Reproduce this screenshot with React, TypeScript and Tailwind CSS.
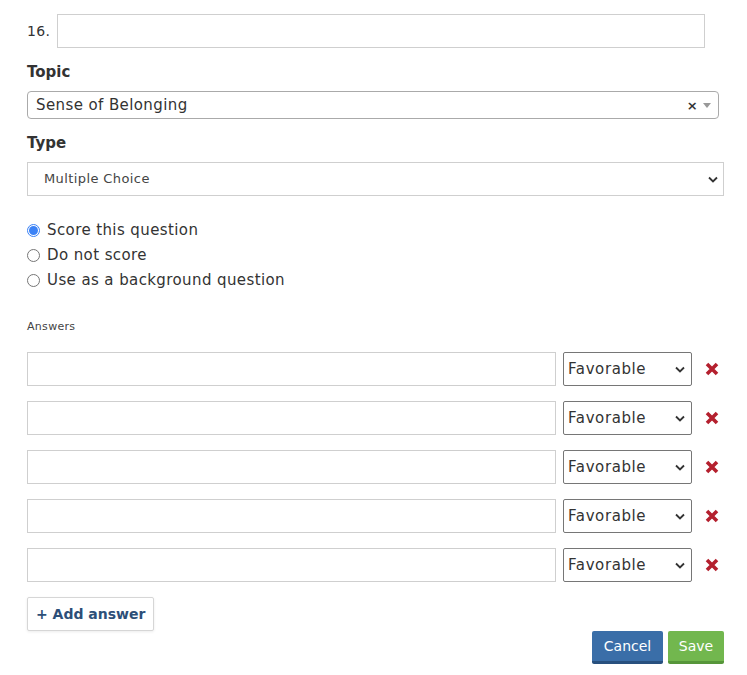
import React from "react";

const Chevron = () => (
  <svg width="10" height="7" viewBox="0 0 10 7" className="shrink-0">
    <path d="M1 1.5 L5 5.5 L9 1.5" fill="none" stroke="#333" strokeWidth="1.8" />
  </svg>
);

const RedX = () => (
  <svg width="14" height="14" viewBox="0 0 14 14">
    <path d="M2 2 L12 12 M12 2 L2 12" stroke="#b4202e" strokeWidth="3.6" strokeLinecap="butt" />
  </svg>
);

const Radio = ({ checked }: { checked?: boolean }) =>
  checked ? (
    <span className="w-[13px] h-[13px] rounded-full border border-[#3b82f6] bg-white flex items-center justify-center shrink-0">
      <span className="w-[9px] h-[9px] rounded-full bg-[#3b82f6]" />
    </span>
  ) : (
    <span className="w-[13px] h-[13px] rounded-full border border-[#767676] bg-white shrink-0" />
  );

const AnswerRow = () => (
  <div className="flex items-center h-[34px]">
    <div className="w-[529px] h-[34px] border border-[#cfcfcf] bg-white" />
    <div className="ml-[7px] w-[129px] h-[34px] border border-[#767676] rounded-[2px] flex items-center justify-between pl-[4px] pr-[6px] text-[15px] tracking-[0.6px] text-[#333]">
      <span>Favorable</span>
      <Chevron />
    </div>
    <div className="ml-[13px]">
      <RedX />
    </div>
  </div>
);

export default function App() {
  return (
    <div
      className="w-[747px] h-[675px] bg-white text-[#333] pl-[27px] pt-[14px]"
      style={{ fontFamily: '"DejaVu Sans", "Open Sans", sans-serif' }}
    >
      <div className="flex items-center h-[34px]">
        <span className="w-[30px] text-[14px] tracking-[0.3px]">16.</span>
        <div className="w-[648px] h-[34px] border border-[#cfcfcf] bg-white" />
      </div>

      <div className="mt-[14px] text-[15px] font-bold leading-[20px]">Topic</div>
      <div className="mt-[9px] w-[692px] h-[28px] border border-[#aaa] rounded-[4px] flex items-center pl-[8px] pr-[7px] text-[15px] tracking-[0.4px]">
        <span className="flex-1">Sense of Belonging</span>
        <span className="text-[13px] font-bold leading-none mr-[5px]">×</span>
        <svg width="8" height="5" viewBox="0 0 8 5"><path d="M0 0 H8 L4 5 Z" fill="#999" /></svg>
      </div>

      <div className="mt-[14px] text-[15px] font-bold leading-[20px]">Type</div>
      <div className="mt-[9px] w-[697px] h-[34px] border border-[#cfcfcf] flex items-center justify-between pl-[16px] pr-[5px] text-[13px] tracking-[0.4px] text-[#444]">
        <span>Multiple Choice</span>
        <Chevron />
      </div>

      <div className="mt-[25px] flex flex-col gap-[6px] text-[15px] tracking-[0.4px]">
        <label className="flex items-center gap-[7px] h-[19px]"><Radio checked /><span>Score this question</span></label>
        <label className="flex items-center gap-[7px] h-[19px]"><Radio /><span>Do not score</span></label>
        <label className="flex items-center gap-[7px] h-[19px]"><Radio /><span>Use as a background question</span></label>
      </div>

      <div className="mt-[30px] text-[11px] tracking-[0.3px] text-[#444] leading-[14px]">Answers</div>

      <div className="mt-[18px] flex flex-col gap-[15px]">
        <AnswerRow />
        <AnswerRow />
        <AnswerRow />
        <AnswerRow />
        <AnswerRow />
      </div>

      <button className="mt-[15px] h-[34px] px-[8px] border border-[#d6d6d6] rounded-[2px] bg-white text-[14px] font-bold text-[#2d4f78] shadow-[0_1px_3px_rgba(0,0,0,0.08)]">
        + Add answer
      </button>

      <div className="w-[697px] flex justify-end gap-[5px]">
        <button className="h-[33px] w-[71px] bg-[#3a6ea8] border-b-[3px] border-[#28507e] rounded-[2px] text-white text-[14px] font-normal">Cancel</button>
        <button className="h-[33px] w-[56px] bg-[#72b74e] border-b-[3px] border-[#56963a] rounded-[2px] text-white text-[14px] font-normal">Save</button>
      </div>
    </div>
  );
}
